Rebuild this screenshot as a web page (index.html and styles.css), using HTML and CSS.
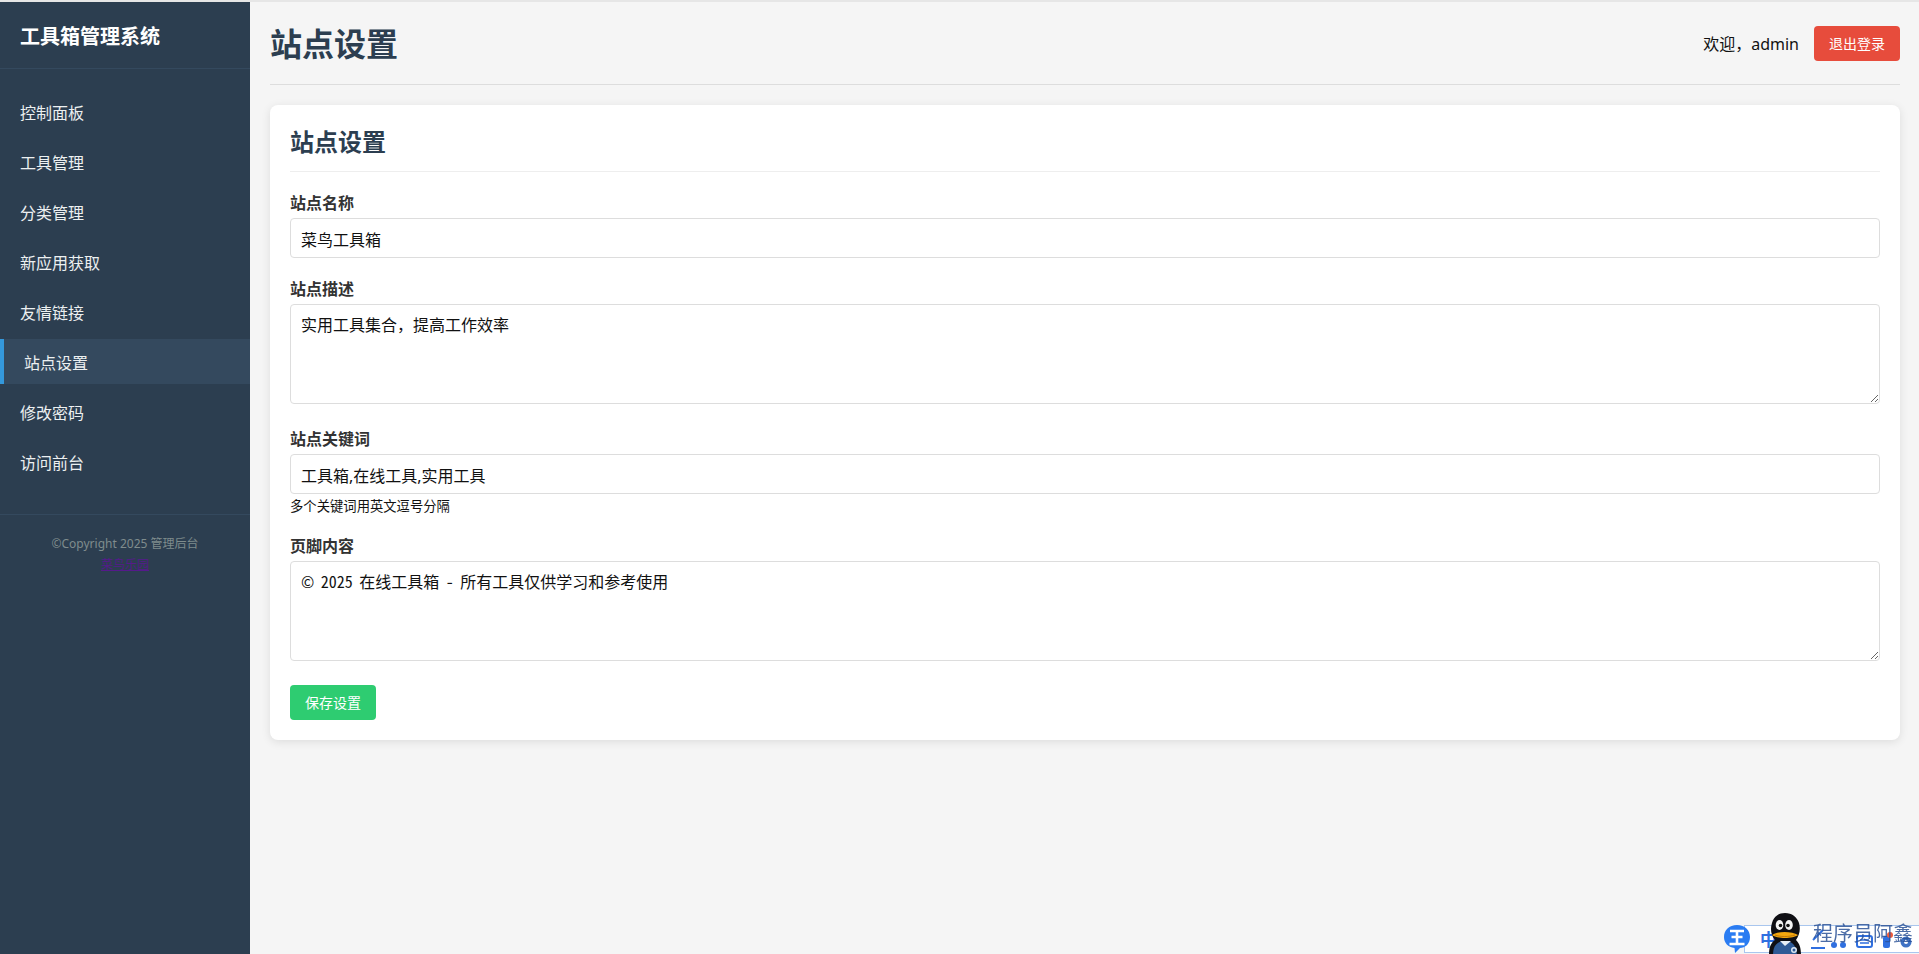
FILE: index.html
```html
<!DOCTYPE html>
<html lang="zh-CN">
<head>
<meta charset="utf-8">
<title>站点设置</title>
<link rel="stylesheet" href="styles.css">
</head>
<body>
<div class="layout">
  <aside class="sidebar">
    <div class="brand">工具箱管理系统</div>
    <nav class="nav">
      <a class="nav-item">控制面板</a>
      <a class="nav-item">工具管理</a>
      <a class="nav-item">分类管理</a>
      <a class="nav-item">新应用获取</a>
      <a class="nav-item">友情链接</a>
      <a class="nav-item active">站点设置</a>
      <a class="nav-item">修改密码</a>
      <a class="nav-item">访问前台</a>
    </nav>
    <div class="side-footer">
      <div>©Copyright 2025 管理后台</div>
      <a class="side-link" href="#">菜鸟乐园</a>
    </div>
  </aside>
  <main class="main">
    <header class="header">
      <h1 class="title">站点设置</h1>
      <div class="user">
        <span class="welcome">欢迎，admin</span>
        <button class="btn btn-red" type="button">退出登录</button>
      </div>
    </header>
    <section class="card">
      <h2 class="card-title">站点设置</h2>
      <div class="group">
        <label class="label">站点名称</label>
        <input class="field" type="text" value="菜鸟工具箱">
      </div>
      <div class="group group-tall">
        <label class="label">站点描述</label>
        <textarea class="field area">实用工具集合，提高工作效率</textarea>
      </div>
      <div class="group">
        <label class="label">站点关键词</label>
        <input class="field" type="text" value="工具箱,在线工具,实用工具">
        <small class="hint">多个关键词用英文逗号分隔</small>
      </div>
      <div class="group group-tall">
        <label class="label">页脚内容</label>
        <textarea class="field area">© 2025 在线工具箱 - 所有工具仅供学习和参考使用</textarea>
      </div>
      <button class="btn btn-green" type="button">保存设置</button>
    </section>
  </main>
</div>

<div class="overlay">
  <div class="ime-bar">
    <span class="ime-zh">中</span>
    <svg class="ime-icons" width="110" height="24" viewBox="0 0 110 24">
      <path d="M8 14 L18 4" stroke="#2f6fe0" stroke-width="2" fill="none"/>
      <path d="M6 22 H20" stroke="#2f6fe0" stroke-width="2" fill="none"/>
      <circle cx="29" cy="19" r="3" fill="#2f6fe0"/>
      <circle cx="38" cy="19" r="3" fill="#2f6fe0"/>
      <rect x="52" y="10" width="15" height="11" rx="2" fill="none" stroke="#2f6fe0" stroke-width="2"/>
      <path d="M55 14 H64 M55 17 H64" stroke="#2f6fe0" stroke-width="1.5"/>
      <rect x="78" y="10" width="7" height="12" rx="2" fill="#2f6fe0"/>
      <circle cx="85" cy="9" r="3" fill="#ee5a3a"/>
      <circle cx="101" cy="16" r="5.5" fill="#3f72c4"/>
      <circle cx="101" cy="16" r="2" fill="#ffffff"/>
    </svg>
  </div>
  <svg class="ime-logo" width="28" height="30" viewBox="0 0 28 30">
    <path d="M14 1 C22 1 27 6 27 13 C27 20 22 24 17 24 L12 29 L11.500 24 C5 23 1 19 1 13 C1 6 6 1 14 1 Z" fill="#2a7cf2"/>
    <path d="M7 7 H21 M8.500 13 H19.500 M6.500 20 H21.500 M14 7 V20" stroke="#ffffff" stroke-width="2.600" fill="none"/>
  </svg>
  <svg class="penguin" width="34" height="42" viewBox="0 0 34 42">
    <path d="M1 42 C1 34 3 30 7 27 C3 22 2 16 4 10 C6 3 11 0 17 0 C24 0 29 4 31 10 C33 17 31 23 28 27 C32 31 33 36 33 42 Z" fill="#0f0f14"/>
    <path d="M5 42 C5 34 8 28 17 28 C26 28 28 34 29 42 Z" fill="#2f5a96"/>
    <path d="M12 28 L17 33 L23 28 Z" fill="#e8eef6"/>
    <circle cx="26" cy="37" r="3" fill="#dce8f5"/>
    <circle cx="26" cy="37" r="1.500" fill="#2f5a96"/>
    <ellipse cx="11.500" cy="12" rx="3.800" ry="5" fill="#f4f4f4"/>
    <ellipse cx="21" cy="12" rx="3.800" ry="5" fill="#f4f4f4"/>
    <circle cx="12.500" cy="12.500" r="1.800" fill="#111111"/>
    <circle cx="20" cy="12.500" r="1.800" fill="#111111"/>
    <path d="M4 22 C9 18 24 18 30 22 C25 26 9 26 4 22 Z" fill="#f4a70f"/>
    <path d="M7 22 C12 24 21 24 27 22" stroke="#b56f05" stroke-width="0.800" fill="none"/>
  </svg>
  <span class="wm-text">程序员阿鑫</span>
</div>
</body>
</html>
```

FILE: styles.css
```css
* { box-sizing: border-box; }

html, body { margin: 0; padding: 0; height: 100%; }

body {
  border-top: 2px solid #e6e6e6;
  background: #f5f5f5;
  color: #111;
  font-family: "Noto Sans", "Noto Sans CJK SC", sans-serif;
  font-size: 16px;
  overflow: hidden;
}

.layout { display: flex; height: 952px; }

.sidebar {
  width: 250px;
  flex: none;
  background: #2c3e50;
  color: #ecf0f1;
}

.brand {
  height: 67px;
  padding: 21px 20px 0;
  font-size: 20px;
  line-height: 27px;
  font-weight: 700;
  color: #fff;
  border-bottom: 1px solid #34495e;
}

.nav { padding-top: 20px; }

.nav-item {
  display: block;
  height: 45px;
  margin-bottom: 5px;
  padding: 14px 20px 10px;
  font-size: 16px;
  line-height: 21px;
  color: #ecf0f1;
}

.nav-item.active {
  background: #34495e;
  border-left: 4px solid #3498db;
}

.side-footer {
  margin-top: 30px;
  padding: 18px 20px 20px;
  border-top: 1px solid #34495e;
  text-align: center;
  font-size: 12px;
  line-height: 21px;
  color: #7f8c8d;
}

.side-link { color: #551a8b; text-decoration: underline; }

.main { flex: 1; min-width: 0; padding: 20px 19px 20px 20px; }

.header {
  display: flex;
  align-items: center;
  justify-content: space-between;
  height: 63px;
  padding-bottom: 20px;
  margin-bottom: 20px;
  border-bottom: 1px solid #ddd;
}

.title {
  margin: 2px 0 0;
  font-size: 32px;
  line-height: 42px;
  font-weight: 700;
  color: #2c3e50;
}

.user { display: flex; align-items: center; gap: 15px; }

.welcome { padding-top: 2px; font-size: 16px; line-height: 21px; color: #111; }

.btn {
  display: block;
  width: 86px;
  height: 35px;
  padding: 0;
  border: 0;
  border-radius: 4px;
  color: #fff;
  font-family: inherit;
  font-size: 14px;
  line-height: 35px;
}

.btn-red { background: #e74c3c; }

.btn-green { background: #2ecc71; }

.card {
  padding: 20px;
  background: #fff;
  border-radius: 8px;
  box-shadow: 0 2px 10px rgba(0, 0, 0, 0.1);
}

.card-title {
  margin: 0 0 20px;
  padding: 2px 0 15px;
  border-bottom: 1px solid #eee;
  font-size: 24px;
  line-height: 29px;
  font-weight: 700;
  color: #2c3e50;
}

.group { margin-bottom: 20px; }

.group-tall { margin-bottom: 24px; }

.label {
  display: block;
  margin-bottom: 5px;
  padding-top: 1px;
  font-size: 16px;
  line-height: 20px;
  font-weight: 700;
  color: #333;
}

.field {
  display: block;
  width: 100%;
  height: 40px;
  padding: 2px 10px 0;
  border: 1px solid #ddd;
  border-radius: 4px;
  background: #fff;
  color: #111;
  font-family: inherit;
  font-size: 16px;
  outline: none;
}

.area {
  height: 100px;
  padding: 10px;
  font-family: "Noto Sans Mono CJK SC", "Noto Sans CJK SC", monospace;
  word-spacing: -1.5px;
  line-height: 18px;
  resize: vertical;
}

.hint {
  display: block;
  margin-top: 4px;
  font-size: 13.33px;
  line-height: 17px;
  color: #111;
}

.overlay {
  position: fixed;
  right: 0;
  bottom: 0;
  width: 219px;
  height: 60px;
  overflow: hidden;
}

.ime-bar {
  position: absolute;
  left: 44px;
  top: 31px;
  width: 175px;
  height: 28px;
  background: #fff;
  border: 1px solid #a9c6ee;
  border-right: 0;
}

.ime-zh {
  position: absolute;
  left: 15px;
  top: 3px;
  color: #2f6fe0;
  font-size: 17px;
  line-height: 22px;
  font-weight: 700;
}

.ime-icons { position: absolute; left: 60px; top: 0; }

.ime-logo { position: absolute; left: 23px; top: 30px; }

.penguin { position: absolute; left: 68px; top: 19px; }

.wm-text {
  position: absolute;
  left: 113px;
  top: 27px;
  font-size: 20px;
  line-height: 26px;
  color: rgba(44, 82, 150, 0.85);
  white-space: nowrap;
}
```
